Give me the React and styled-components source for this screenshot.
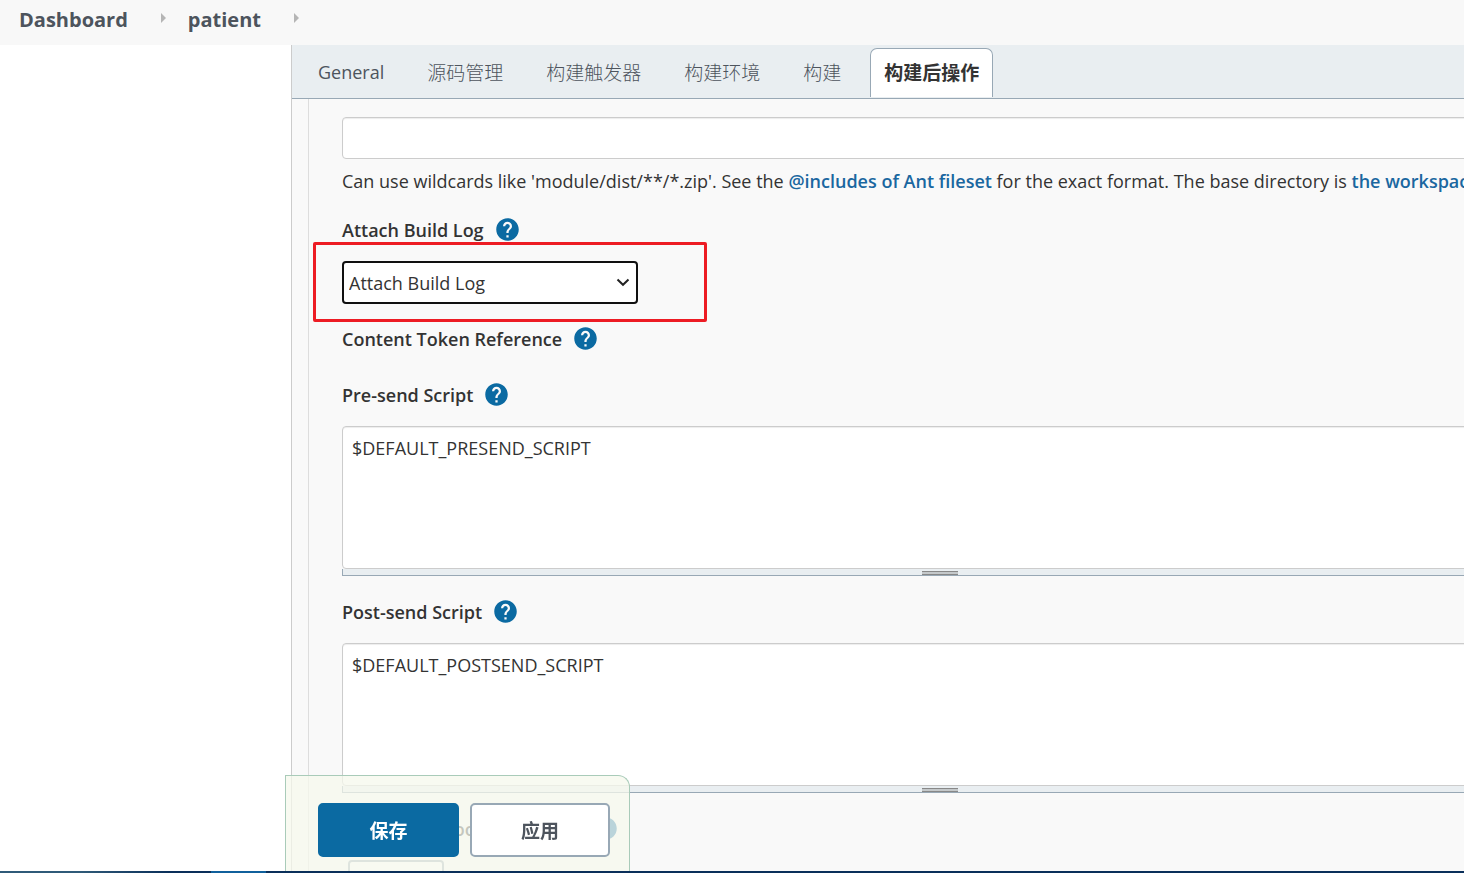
import React from "react";
import styled, { createGlobalStyle, css } from "styled-components";
import { MdHelp } from "react-icons/md";

const GlobalStyle = createGlobalStyle`
  *, *::before, *::after { box-sizing: border-box; }
  body {
    margin: 0;
    overflow: hidden;
    background: #fff;
    color: #333;
    font-family: "Open Sans", "Noto Sans CJK SC", sans-serif;
    font-size: 18px;
    line-height: 28px;
  }
`;

const Page = styled.div`
  display: flex;
  flex-direction: column;
  height: 100vh;
  overflow: hidden;
`;

const Breadcrumbs = styled.nav`
  display: flex;
  flex: none;
  align-items: center;
  height: 45px;
  padding: 0 19px 6px;
  background: #f8f8f8;
`;

const Crumb = styled.a`
  color: #4d545d;
  font-size: 20px;
  font-weight: 700;
  text-decoration: none;
`;

const Arrow = styled.span`
  margin: 0 22px 3px 33px;
  border: solid transparent;
  border-width: 5px 0 5px 5px;
  border-left-color: #b5b5b5;
`;

const Body = styled.div`
  display: flex;
  flex: 1;
  min-height: 0;
`;

const SidePanel = styled.aside`
  flex: none;
  width: 291px;
`;

const MainPanel = styled.main`
  display: flex;
  flex: 1;
  flex-direction: column;
  min-width: 0;
  border-left: 1px solid #ccc;
  background: #f9f9f9;
`;

const TabBar = styled.div`
  display: flex;
  flex: none;
  gap: 15px;
  height: 54px;
  padding: 3px 12px 1px;
  border-bottom: 1px solid #98a8b5;
  background: #e9eef1;
`;

const Tab = styled.button`
  padding: 0 13px 2px;
  border: 1px solid transparent;
  border-bottom: 0;
  border-radius: 7px 7px 0 0;
  background: none;
  color: #4d545d;
  font-family: inherit;
  font-size: ${(p) => (p.$latin ? 18 : 19)}px;
  font-weight: ${(p) => (p.$latin ? 400 : 300)};
  white-space: nowrap;
  ${(p) =>
    p.$active &&
    css`
      border-color: #98a8b5;
      background: #fff;
      color: #333;
      font-weight: 700;
    `}
`;

const FormViewport = styled.div`
  flex: 1;
  min-height: 0;
  padding-left: 16px;
  overflow: hidden;
`;

const Form = styled.form`
  width: calc(100% + 107px);
  padding: 18px 33px 0;
  border-left: 1px solid #ddd;
`;

const boxed = css`
  display: block;
  border: 1px solid #ccc;
  border-radius: 4px;
  background: #fff;
  box-shadow: inset 0 1px 1px rgba(0, 0, 0, 0.075);
  color: #333;
  font-family: inherit;
  font-size: 18px;
`;

const TextInput = styled.input`
  ${boxed}
  width: 100%;
  height: 42px;
  padding: 6px 9px;
`;

const HelpText = styled.p`
  margin: 8px 0 21px;
  font-size: 18px;
  white-space: nowrap;
`;

const Link = styled.a`
  color: #1a67a0;
  font-weight: 600;
  text-decoration: none;
`;

const LabelRow = styled.div`
  display: flex;
  align-items: center;
  gap: 10px;
  height: 28px;
  margin-bottom: ${(p) => (p.$loose ? 28 : 17)}px;
`;

const Label = styled.label`
  font-weight: 600;
`;

const HelpButton = styled.button`
  display: flex;
  padding: 0 0 1px;
  border: 0;
  background: none;
  color: #0b6aa2;
`;

const SelectWrap = styled.div`
  position: relative;
  width: 296px;
  margin-bottom: 21px;
`;

const Select = styled.select`
  ${boxed}
  width: 100%;
  height: 43px;
  padding: 0 5px;
  border: 2px solid #101010;
  box-shadow: none;
  appearance: none;
`;

const Chevron = styled.svg`
  position: absolute;
  top: 17px;
  right: 8px;
  pointer-events: none;
`;

const Highlight = styled.div`
  position: absolute;
  inset: -19px -69px -18px -29px;
  border: 3px solid #ed1c24;
  border-radius: 2px;
  pointer-events: none;
`;

const ScriptField = styled.div`
  margin-bottom: 22px;
`;

const TextArea = styled.textarea`
  ${boxed}
  width: 100%;
  height: 143px;
  padding: 7px 9px;
  line-height: 28px;
  resize: none;
`;

const ResizeBar = styled.div`
  display: flex;
  justify-content: center;
  height: 7px;
  border: 1px solid #98a8b5;
  border-top: 0;
  background: #e9eef1;
`;

const Grip = styled.span`
  width: 36px;
  height: 4px;
  margin-top: 2px;
  border: solid #888;
  border-width: 1px 0;
  background: #c4c8ca;
`;

const AddButton = styled.button`
  width: 96px;
  height: 40px;
  margin-left: 6px;
  border: 2px solid #98a8b5;
  border-radius: 4px;
  background: #fff;
  color: #4d545d;
  font: inherit;
`;

const ActionBar = styled.div`
  position: fixed;
  bottom: 2px;
  left: 285px;
  display: flex;
  gap: 11px;
  padding: 27px 19px 14px 32px;
  border: 1px solid #a9cbb9;
  border-bottom: 0;
  border-radius: 0 12px 0 0;
  background: rgba(245, 248, 236, 0.75);
`;

const ActionButton = styled.button`
  width: ${(p) => (p.$primary ? 141 : 140)}px;
  height: 54px;
  border: 2px solid ${(p) => (p.$primary ? "#0b6aa2" : "#98a8b5")};
  border-radius: 5px;
  background: ${(p) => (p.$primary ? "#0b6aa2" : "#fff")};
  color: ${(p) => (p.$primary ? "#fff" : "#4d545d")};
  font-family: inherit;
  font-size: 19px;
  font-weight: 700;
`;

const Taskbar = styled.div`
  flex: none;
  height: 2px;
  background: linear-gradient(
    90deg,
    #2f5a78 0 80px,
    #0a2f5a 170px 211px,
    #10609c 211px 266px,
    #0a2f5a 266px
  );
`;

const tabs = ["General", "源码管理", "构建触发器", "构建环境", "构建", "构建后操作"];

function FieldLabel({ htmlFor, loose, children }) {
  return (
    <LabelRow $loose={loose}>
      <Label htmlFor={htmlFor}>{children}</Label>
      <HelpButton type="button" aria-label={`Help for ${children}`}>
        <MdHelp size={27} />
      </HelpButton>
    </LabelRow>
  );
}

function Script({ id, label, value }) {
  return (
    <ScriptField>
      <FieldLabel htmlFor={id}>{label}</FieldLabel>
      <TextArea id={id} defaultValue={value} spellCheck={false} />
      <ResizeBar>
        <Grip />
      </ResizeBar>
    </ScriptField>
  );
}

export default function App() {
  return (
    <Page>
      <GlobalStyle />
      <Breadcrumbs>
        <Crumb href="#dashboard">Dashboard</Crumb>
        <Arrow />
        <Crumb href="#patient">patient</Crumb>
        <Arrow />
      </Breadcrumbs>
      <Body>
        <SidePanel />
        <MainPanel>
          <TabBar role="tablist">
            {tabs.map((name, i) => {
              const active = i === tabs.length - 1;
              return (
                <Tab key={name} role="tab" aria-selected={active} $active={active} $latin={i === 0}>
                  {name}
                </Tab>
              );
            })}
          </TabBar>
          <FormViewport>
            <Form>
              <TextInput type="text" aria-label="Attachments" />
              <HelpText>
                Can use wildcards like 'module/dist/**/*.zip'. See the{" "}
                <Link href="#fileset">@includes of Ant fileset</Link> for the exact format. The base
                directory is <Link href="#workspace">the workspace</Link>.
              </HelpText>
              <FieldLabel htmlFor="attach-log">Attach Build Log</FieldLabel>
              <SelectWrap>
                <Select id="attach-log">
                  <option>Attach Build Log</option>
                </Select>
                <Chevron width="14" height="9" viewBox="0 0 14 9" fill="none">
                  <path d="M1.5 1.5 7 6.8l5.500-5.300" stroke="#222" strokeWidth="2" />
                </Chevron>
                <Highlight />
              </SelectWrap>
              <FieldLabel loose>Content Token Reference</FieldLabel>
              <Script id="presend" label="Pre-send Script" value="$DEFAULT_PRESEND_SCRIPT" />
              <Script id="postsend" label="Post-send Script" value="$DEFAULT_POSTSEND_SCRIPT" />
              <FieldLabel htmlFor="add-classpath">Additional groovy classpath</FieldLabel>
              <AddButton id="add-classpath" type="button">新增</AddButton>
            </Form>
          </FormViewport>
        </MainPanel>
      </Body>
      <ActionBar>
        <ActionButton $primary>保存</ActionButton>
        <ActionButton>应用</ActionButton>
      </ActionBar>
      <Taskbar />
    </Page>
  );
}
